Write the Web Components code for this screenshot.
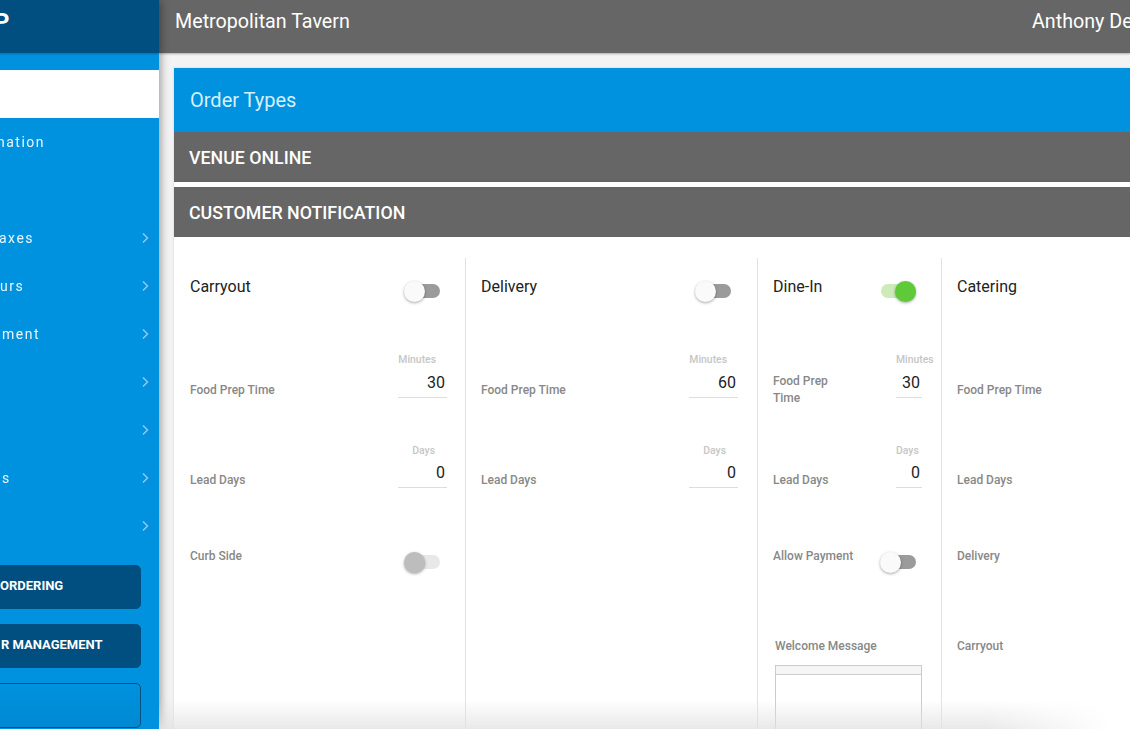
<!DOCTYPE html>
<html lang="en">
<head>
<meta charset="utf-8">
<title>Order Types</title>
<style>
  html, body { margin: 0; height: 100%; overflow: hidden; }
  body { font-family: Roboto, "Liberation Sans", sans-serif; background: #f3f3f3; }
</style>
</head>
<body>
<app-shell>
  <app-sidebar slot="side">
    <side-item indent="0" active></side-item>
    <side-item indent="-3">nation</side-item>
    <side-item indent="0"></side-item>
    <side-item indent="-1" arrow>axes</side-item>
    <side-item indent="0" arrow>urs</side-item>
    <side-item indent="2" arrow>ment</side-item>
    <side-item indent="0" arrow></side-item>
    <side-item indent="0" arrow></side-item>
    <side-item indent="2" arrow>s</side-item>
    <side-item indent="0" arrow></side-item>
    <side-button indent="-1">ORDERING</side-button>
    <side-button indent="0">R MANAGEMENT</side-button>
    <side-button outline></side-button>
  </app-sidebar>
  <app-topbar slot="top" user="Anthony DeB">Metropolitan Tavern</app-topbar>
  <order-card slot="main" heading="Order Types">
    <section-band>VENUE ONLINE</section-band>
    <section-band>CUSTOMER NOTIFICATION</section-band>
    <order-columns>
      <order-column style="width:292px;padding-left:16px">
        <field-row kind="title" label="Carryout"><toggle-switch></toggle-switch></field-row>
        <field-row label="Food Prep Time"><number-field unit="Minutes" value="30"></number-field></field-row>
        <field-row label="Lead Days"><number-field unit="Days" value="0"></number-field></field-row>
        <field-row kind="short" label="Curb Side"><toggle-switch state="dim"></toggle-switch></field-row>
      </order-column>
      <order-column style="width:292px;padding-right:19px">
        <field-row kind="title" label="Delivery"><toggle-switch></toggle-switch></field-row>
        <field-row label="Food Prep Time"><number-field unit="Minutes" value="60"></number-field></field-row>
        <field-row label="Lead Days"><number-field unit="Days" value="0"></number-field></field-row>
      </order-column>
      <order-column style="width:184px">
        <field-row kind="title" label="Dine-In"><toggle-switch state="on"></toggle-switch></field-row>
        <field-row label="Food Prep Time" wrap><number-field unit="Minutes" value="30" narrow></number-field></field-row>
        <field-row label="Lead Days"><number-field unit="Days" value="0" narrow></number-field></field-row>
        <field-row kind="short" label="Allow Payment"><toggle-switch></toggle-switch></field-row>
        <message-box label="Welcome Message"></message-box>
      </order-column>
      <order-column style="flex:1">
        <field-row kind="title" label="Catering"></field-row>
        <field-row label="Food Prep Time"></field-row>
        <field-row label="Lead Days"></field-row>
        <field-row kind="short" label="Delivery"></field-row>
        <field-row kind="short" label="Carryout"></field-row>
      </order-column>
    </order-columns>
  </order-card>
</app-shell>

<script>
function shadow(el, html) {
  el.attachShadow({ mode: "open" }).innerHTML = html;
}

// page frame: sidebar, top bar, scroll area
class AppShell extends HTMLElement {
  constructor() {
    super();
    shadow(this, `
      <style>
        :host { display: flex; width: 100%; height: 100vh; overflow: hidden; position: relative; }
        .right { flex: 1; min-width: 0; display: flex; flex-direction: column; }
        .main { flex: 1; min-height: 0; padding: 15px 0 0 15px; overflow: hidden; }
        .fade {
          position: absolute; left: 159px; right: 0; bottom: 0; height: 29px; pointer-events: none; z-index: 3;
          background: linear-gradient(to bottom, rgba(225,225,225,0), rgba(225,225,225,.75));
          -webkit-mask-image: linear-gradient(to right, #000 85%, transparent 98%);
        }
      </style>
      <slot name="side"></slot>
      <div class="right">
        <slot name="top"></slot>
        <div class="main"><slot name="main"></slot></div>
      </div>
      <div class="fade"></div>
    `);
  }
}
customElements.define("app-shell", AppShell);

// SIDEBAR
class AppSidebar extends HTMLElement {
  constructor() {
    super();
    shadow(this, `
      <style>
        :host {
          display: flex; flex-direction: column; flex: none; width: 159px; height: 100%;
          background: #0092de; overflow: hidden; position: relative; z-index: 2;
          box-shadow: 2px 0 8px rgba(0,0,0,.35);
        }
        header {
          height: 53px; flex: none; background: #004f80; color: #fff; overflow: hidden;
          font: 700 24px/44px Roboto, sans-serif; box-shadow: 0 1px 2px rgba(0,0,0,.25);
        }
        header span { display: block; margin-left: -6px; }
        nav { padding-top: 17px; display: flex; flex-direction: column; }
      </style>
      <header><span>P</span></header>
      <nav><slot></slot></nav>
    `);
  }
}
customElements.define("app-sidebar", AppSidebar);

class SideItem extends HTMLElement {
  constructor() {
    super();
    const indent = this.getAttribute("indent") || 0;
    const active = this.hasAttribute("active");
    const arrow = this.hasAttribute("arrow");
    shadow(this, `
      <style>
        :host {
          display: flex; align-items: center; justify-content: space-between; height: 48px;
          overflow: hidden; color: #fff; background: ${active ? "#fff" : "transparent"};
          font: 400 14px/20px Roboto, sans-serif; letter-spacing: 1.5px;
        }
        .t { margin-left: ${indent}px; white-space: nowrap; opacity: .92; }
        svg { margin-right: 9px; flex: none; }
      </style>
      <span class="t"><slot></slot></span>
      ${arrow ? `<svg width="10" height="12" viewBox="0 0 10 12"><path d="M3 1.5 7.5 6 3 10.5" fill="none" stroke="#8fcdf0" stroke-width="1.4"/></svg>` : ""}
    `);
  }
}
customElements.define("side-item", SideItem);

class SideButton extends HTMLElement {
  constructor() {
    super();
    const indent = this.getAttribute("indent") || 0;
    const outline = this.hasAttribute("outline");
    shadow(this, `
      <style>
        :host { display: block; width: 141px; margin-top: 15px; }
        div {
          box-sizing: border-box; height: ${outline ? 45 : 44}px; margin-left: -12px; padding-left: 12px; overflow: hidden;
          border-radius: 5px; color: #fff; white-space: nowrap;
          font: 700 13px/40px Roboto, sans-serif;
          background: ${outline ? "linear-gradient(#0092de, #0089d2)" : "#004f80"};
          border: 1px solid #004f80;
        }
        span { display: block; margin-left: ${indent}px; }
      </style>
      <div><span><slot></slot></span></div>
    `);
  }
}
customElements.define("side-button", SideButton);

// TOP BAR
class AppTopbar extends HTMLElement {
  constructor() {
    super();
    shadow(this, `
      <style>
        :host {
          display: flex; justify-content: space-between; align-items: center; flex: none;
          height: 53px; box-sizing: border-box; padding: 0 0 10px 16px; background: #666; color: #fff;
          font: 400 19.7px/24px Roboto, sans-serif; overflow: hidden; white-space: nowrap;
          box-shadow: 0 1px 2px rgba(0,0,0,.3); position: relative;
        }
        .user { flex: none; width: 98px; overflow: hidden; }
      </style>
      <span><slot></slot></span>
      <span class="user">${this.getAttribute("user")}</span>
    `);
  }
}
customElements.define("app-topbar", AppTopbar);

// CARD
class OrderCard extends HTMLElement {
  constructor() {
    super();
    shadow(this, `
      <style>
        :host { display: block; background: #fff; box-shadow: 0 0 2px rgba(0,0,0,.15); height: 100%; }
        h2 {
          margin: 0; height: 64px; padding-left: 16px; background: #0092de; color: #d8effb;
          font: 400 20px/64px Roboto, sans-serif;
        }
      </style>
      <h2>${this.getAttribute("heading")}</h2>
      <slot></slot>
    `);
  }
}
customElements.define("order-card", OrderCard);

class SectionBand extends HTMLElement {
  constructor() {
    super();
    shadow(this, `
      <style>
        :host {
          display: block; height: 50px; margin-bottom: 5px; padding-left: 15px; background: #666; color: #fff;
          font: 500 17.8px/52px Roboto, sans-serif; white-space: nowrap;
        }
      </style>
      <slot></slot>
    `);
  }
}
customElements.define("section-band", SectionBand);

class OrderColumns extends HTMLElement {
  constructor() {
    super();
    shadow(this, `
      <style>
        :host { display: flex; margin-top: 21px; }
      </style>
      <slot></slot>
    `);
  }
}
customElements.define("order-columns", OrderColumns);

class OrderColumn extends HTMLElement {
  constructor() {
    super();
    shadow(this, `
      <style>
        :host {
          display: block; flex: none; box-sizing: border-box; padding: 1px 18px 0 15px; height: 520px;
          border-right: 1px solid #e2e2e2;
        }
        :host(:last-child) { border-right: 0; }
      </style>
      <slot></slot>
    `);
  }
}
customElements.define("order-column", OrderColumn);

class FieldRow extends HTMLElement {
  constructor() {
    super();
    const wrap = this.hasAttribute("wrap");
    const label = this.getAttribute("label");
    shadow(this, `
      <style>
        :host {
          display: flex; justify-content: space-between; align-items: flex-start;
          height: 90px; box-sizing: border-box;
        }
        .l { color: #888; font: 500 12px/${wrap ? 17 : 18}px Roboto, sans-serif; ${wrap ? "width: 70px;" : "white-space: nowrap;"} }
        :host([kind=title]) .l { color: #222; font: 400 16px/22px Roboto, sans-serif; padding-top: 17px; }
        :host([kind=short]) .l { padding-top: 18px; }
        :host(:not([kind])) .l { padding-top: ${wrap ? 24 : 32}px; }
        .r { display: flex; flex: none; }
        :host([kind=title]) .r { padding-top: 22px; padding-right: 7px; }
        :host([kind=short]) .r { padding-top: 23px; padding-right: 7px; }
      </style>
      <span class="l">${label}</span>
      <span class="r"><slot></slot></span>
    `);
  }
}
customElements.define("field-row", FieldRow);

class NumberField extends HTMLElement {
  constructor() {
    super();
    const narrow = this.hasAttribute("narrow");
    const days = this.getAttribute("unit") === "Days";
    shadow(this, `
      <style>
        :host {
          display: block; width: ${narrow ? 26 : 49}px; margin-top: 5px; margin-right: ${narrow ? 1 : 0}px;
        }
        .u {
          color: #c6c6c6; font: 500 10.4px/12px Roboto, sans-serif; white-space: nowrap;
          text-align: ${narrow ? "left" : "right"}; padding-right: ${narrow ? 0 : days ? 12 : 11}px;
          padding-top: ${days ? 1 : 0}px;
        }
        .v {
          height: 27px; box-sizing: border-box; border-bottom: 1px solid #ddd; color: #222; margin-top: ${days ? 4 : 5}px;
          font: 400 16px/24px Roboto, sans-serif; text-align: right; padding-right: 2px;
        }
      </style>
      <div class="u">${this.getAttribute("unit")}</div>
      <div class="v">${this.getAttribute("value")}</div>
    `);
  }
}
customElements.define("number-field", NumberField);

class ToggleSwitch extends HTMLElement {
  constructor() {
    super();
    const state = this.getAttribute("state") || "off";
    const colors = {
      off: ["#9b9b9b", "#fafafa"],
      on: ["#cdeab9", "#5fc93a"],
      dim: ["#e8e8e8", "#bdbdbd"]
    }[state];
    const on = state === "on";
    shadow(this, `
      <style>
        :host { display: block; position: relative; width: 36px; height: 21px; flex: none; }
        .track { position: absolute; left: 1px; right: 0; top: 3px; height: 14px; border-radius: 7px; background: ${colors[0]}; }
        .knob {
          position: absolute; top: 0; ${on ? "right: 0" : "left: 0"}; width: 21px; height: 21px; border-radius: 50%;
          background: ${colors[1]}; box-shadow: 0 1px 3px rgba(0,0,0,.35);
        }
      </style>
      <div class="track"></div><div class="knob"></div>
    `);
  }
}
customElements.define("toggle-switch", ToggleSwitch);

class MessageBox extends HTMLElement {
  constructor() {
    super();
    shadow(this, `
      <style>
        :host { display: block; margin-left: 2px; margin-right: 1px; padding-top: 18px; }
        .l { color: #888; font: 500 12px/18px Roboto, sans-serif; }
        .box { margin-top: 10px; height: 100px; border: 1px solid #ccc; }
        .bar { height: 8px; background: #f5f5f5; border-bottom: 1px solid #ccc; }
      </style>
      <div class="l">${this.getAttribute("label")}</div>
      <div class="box"><div class="bar"></div></div>
    `);
  }
}
customElements.define("message-box", MessageBox);
</script>
</body>
</html>
